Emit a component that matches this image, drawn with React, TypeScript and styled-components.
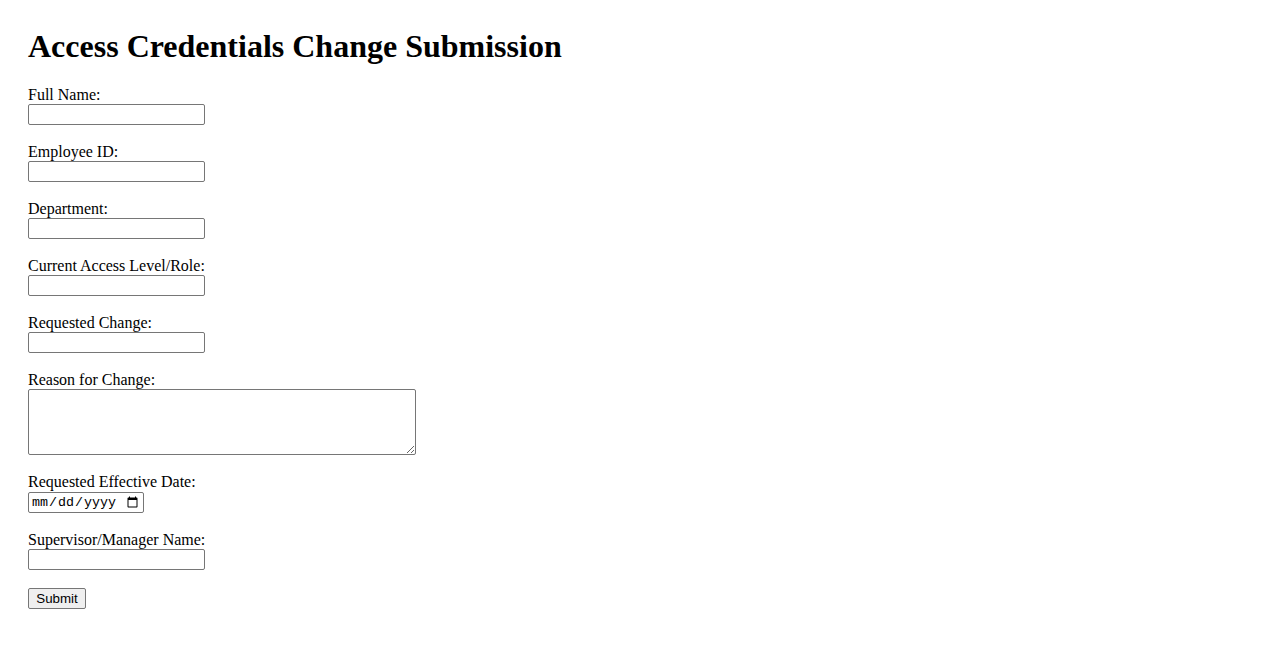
import React from "react";
import styled, { createGlobalStyle } from "styled-components";

const GlobalStyle = createGlobalStyle`
  html, body {
    margin: 0;
    padding: 0;
    background: #ffffff;
  }
  body {
    font-family: "Liberation Serif", "Times New Roman", serif;
    font-size: 16px;
    color: #000000;
  }
`;

const Page = styled.div`
  padding: 28px;
`;

const Title = styled.h1`
  margin: 0 0 21px 0;
  font-size: 32px;
  line-height: 37px;
  font-weight: bold;
`;

const Form = styled.form`
  display: flex;
  flex-direction: column;
  align-items: flex-start;
  gap: 18px;
`;

const Field = styled.div`
  display: flex;
  flex-direction: column;
  align-items: flex-start;
`;

const Label = styled.label`
  display: block;
  line-height: 18px;
  height: 18px;
`;

const controlBase = `
  box-sizing: border-box;
  border: 1px solid #767676;
  border-radius: 2px;
  background: #ffffff;
  font-family: "Liberation Sans", Arial, sans-serif;
  font-size: 13.333px;
  margin: 0;
`;

const TextInput = styled.input<{ $width?: number }>`
  ${controlBase}
  width: ${(p) => p.$width ?? 177}px;
  height: 21px;
  padding: 1px 2px;
`;

const DateInput = styled.input`
  ${controlBase}
  font-family: "Liberation Mono", "DejaVu Sans Mono", monospace;
  width: 116px;
  height: 21px;
  padding: 1px 2px;
  margin-top: 1px;
`;

const TextArea = styled.textarea`
  ${controlBase}
  font-family: "Liberation Mono", monospace;
  width: 388px;
  height: 66px;
  padding: 2px;
  display: block;
`;

const SubmitButton = styled.button`
  box-sizing: border-box;
  height: 21px;
  width: 58px;
  padding: 1px 6px;
  border: 1px solid #767676;
  border-radius: 2px;
  background: #efefef;
  color: #000000;
  font-family: "Liberation Sans", Arial, sans-serif;
  font-size: 13.333px;
  line-height: 15px;
`;

const fields = [
  { id: "fullName", label: "Full Name:" },
  { id: "employeeId", label: "Employee ID:" },
  { id: "department", label: "Department:" },
  { id: "currentRole", label: "Current Access Level/Role:" },
  { id: "requestedChange", label: "Requested Change:" },
];

export default function App() {
  return (
    <Page>
      <GlobalStyle />
      <Title>Access Credentials Change Submission</Title>
      <Form onSubmit={(e) => e.preventDefault()}>
        {fields.map((f) => (
          <Field key={f.id}>
            <Label htmlFor={f.id}>{f.label}</Label>
            <TextInput id={f.id} type="text" />
          </Field>
        ))}
        <Field>
          <Label htmlFor="reason">Reason for Change:</Label>
          <TextArea id="reason" />
        </Field>
        <Field>
          <Label htmlFor="effectiveDate">Requested Effective Date:</Label>
          <DateInput id="effectiveDate" type="date" />
        </Field>
        <Field>
          <Label htmlFor="supervisor">Supervisor/Manager Name:</Label>
          <TextInput id="supervisor" type="text" />
        </Field>
        <SubmitButton type="submit">Submit</SubmitButton>
      </Form>
    </Page>
  );
}
